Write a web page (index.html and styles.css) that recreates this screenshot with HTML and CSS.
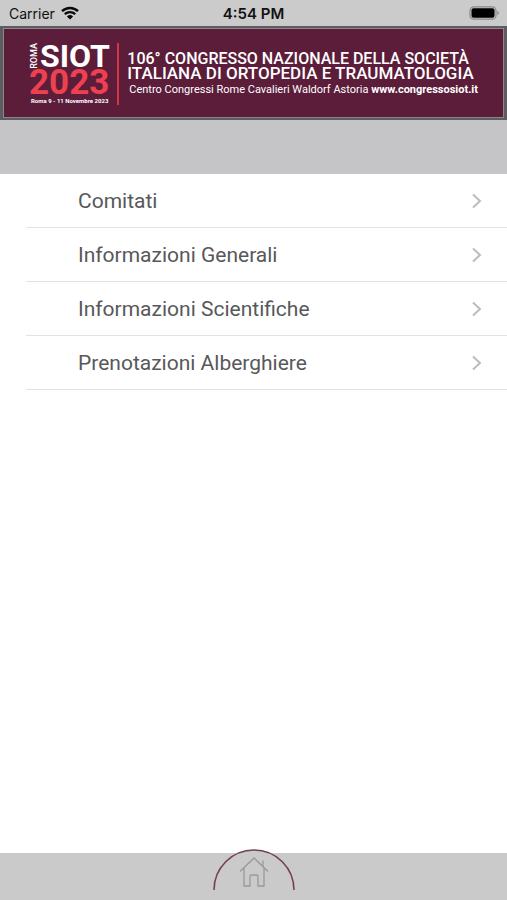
FILE: index.html
```html
<!DOCTYPE html>
<html lang="it">
<head>
<meta charset="utf-8">
<meta name="viewport" content="width=device-width, initial-scale=1">
<title>SIOT 2023</title>
<link rel="stylesheet" href="styles.css">
</head>
<body>
<div class="status">
  <div class="carrier">Carrier
    <svg width="18" height="14" viewBox="0 0 18 14" aria-hidden="true">
      <path d="M1 5.2a11.6 11.6 0 0 1 16 0M3.8 8.2a7.6 7.6 0 0 1 10.4 0" fill="none" stroke="#0a0a0a" stroke-width="2.4"/>
      <path d="M9 13.6 5.9 10.5a4.5 4.5 0 0 1 6.2 0z" fill="#0a0a0a"/>
    </svg>
  </div>
  <div class="time">4:54 PM</div>
  <div class="battery">
    <svg width="31" height="14" viewBox="0 0 31 14" aria-hidden="true">
      <rect x="1" y=".8" width="26" height="12.4" rx="3.8" fill="none" stroke="#8a8a8a" stroke-width="1.2"/>
      <rect x="2.500" y="2.300" width="23" height="9.400" rx="2" fill="#000"/>
      <path d="M28.4 4.8c2 .8 2 3.6 0 4.4z" fill="#8a8a8a"/>
    </svg>
  </div>
</div>
<header class="banner">
  <div class="panel">
    <div class="logo">
      <div class="logo-top"><span class="roma">ROMA</span><span class="siot">SIOT</span></div>
      <div class="year">2023</div>
      <div class="dates">Roma 9 - 11 Novembre 2023</div>
    </div>
    <div class="headline">
      <h1><span class="line">106° CONGRESSO NAZIONALE DELLA SOCIETÀ</span> <span class="line wide">ITALIANA DI ORTOPEDIA E TRAUMATOLOGIA</span></h1>
      <p>Centro Congressi Rome Cavalieri Waldorf Astoria <b>www.congressosiot.it</b></p>
    </div>
  </div>
</header>
<div class="toolbar"></div>
<main>
  <nav class="list">
    <a href="#comitati">Comitati<svg width="12" height="16" viewBox="0 0 12 16" aria-hidden="true"><path d="M2 1.5 9 8l-7 6.5"/></svg></a>
    <a href="#generali">Informazioni Generali<svg width="12" height="16" viewBox="0 0 12 16" aria-hidden="true"><path d="M2 1.5 9 8l-7 6.5"/></svg></a>
    <a href="#scientifiche">Informazioni Scientifiche<svg width="12" height="16" viewBox="0 0 12 16" aria-hidden="true"><path d="M2 1.5 9 8l-7 6.5"/></svg></a>
    <a href="#alberghiere">Prenotazioni Alberghiere<svg width="12" height="16" viewBox="0 0 12 16" aria-hidden="true"><path d="M2 1.5 9 8l-7 6.5"/></svg></a>
  </nav>
</main>
<footer class="tabbar">
  <a class="home" href="#home" aria-label="Home">
    <svg width="84" height="44" viewBox="0 0 84 44" aria-hidden="true">
      <path d="M2 42A40 40 0 0 1 82 42" fill="#cacaca" stroke="#743f55" stroke-width="1.6"/>
      <path d="M28 23.5 42 10 56 23.500M32 20V38H38V28.500Q38 27 39.500 27H44.500Q46 27 46 28.500V38H52V20M51 18.500V12.500" fill="none" stroke="#999" stroke-width="1.3"/>
    </svg>
  </a>
</footer>
</body>
</html>
```
FILE: styles.css
```css
* { box-sizing: border-box; }

body {
  margin: 0;
  min-height: 100vh;
  display: flex;
  flex-direction: column;
  background: #fff;
  font-family: Inter, "Liberation Sans", sans-serif;
}

.status {
  display: grid;
  grid-template-columns: 1fr auto 1fr;
  align-items: center;
  height: 26px;
  padding: 0 7px;
  background: #cbcbcb;
  color: #111;
  font-size: 14px;
}

.carrier {
  display: flex;
  align-items: center;
  gap: 6px;
  padding-left: 2px;
}

.time {
  font-size: 15px;
  font-weight: 600;
}

.battery {
  display: flex;
  justify-content: flex-end;
}

.banner {
  height: 94px;
  padding: 2px 3px;
  background: #5c5d5f;
}

.panel {
  display: flex;
  align-items: center;
  height: 100%;
  padding: 2px 25px 0;
  border: 1px solid #8f8589;
  background: #5b1d3a;
  color: #fff;
  font-family: Roboto, "Liberation Sans", sans-serif;
}

.logo {
  width: 92px;
  border-right: 2px solid #d53543;
}

.logo-top {
  display: flex;
  align-items: center;
  height: 26px;
}

.roma {
  width: 11px;
  writing-mode: vertical-rl;
  rotate: 180deg;
  font-size: 9px;
  font-weight: 500;
  line-height: 11px;
}

.siot {
  font-size: 32px;
  font-weight: 700;
  line-height: 26px;
}

.year {
  color: #ee4150;
  font-size: 35px;
  font-weight: 700;
  line-height: 28px;
}

.dates {
  padding-left: 2px;
  font-size: 6px;
  font-weight: 700;
  line-height: 8px;
  white-space: nowrap;
}

.headline {
  padding-left: 8px;
  white-space: nowrap;
}

h1 {
  margin: 0;
  font-size: 16px;
  font-weight: 500;
  line-height: 15px;
}

.line { display: block; }

.wide { font-size: 17px; }

p {
  margin: 2px 0 0;
  padding-left: 2px;
  font-size: 11px;
  line-height: 14px;
}

.toolbar {
  height: 54px;
  background: #c5c5c7;
}

main { flex: 1; }

.list {
  margin-left: 26px;
}

.list a {
  display: flex;
  align-items: center;
  justify-content: space-between;
  height: 54px;
  padding: 0 24px 0 52px;
  border-bottom: 1px solid #e2e2e3;
  color: #58585a;
  font-family: Roboto, "Liberation Sans", sans-serif;
  font-size: 21px;
  text-decoration: none;
}

.list svg {
  fill: none;
  stroke: #bcbcbe;
  stroke-width: 2;
}

.tabbar {
  display: flex;
  justify-content: center;
  height: 47px;
  background: #cacaca;
}

.home {
  height: 44px;
  margin-top: -5px;
}
```
